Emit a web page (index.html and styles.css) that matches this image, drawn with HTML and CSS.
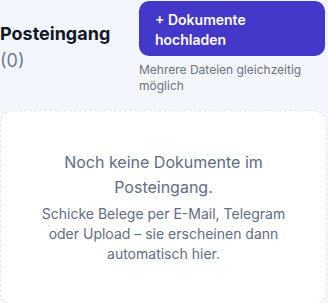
FILE: index.html
```html
<!DOCTYPE html>
<html lang="de">
<head>
  <meta charset="UTF-8">
  <meta name="viewport" content="width=device-width, initial-scale=1.0">
  <title>Posteingang</title>
  <link rel="stylesheet" href="styles.css">
</head>
<body>
  <div class="page">
    <div class="inbox-header">
      <h2 class="inbox-title">Posteingang <span class="inbox-count">(0)</span></h2>
      <div class="upload">
        <button class="upload-btn">+ Dokumente hochladen</button>
        <div class="upload-hint">Mehrere Dateien gleichzeitig möglich</div>
      </div>
    </div>

    <div class="empty-card">
      <p class="empty-title">Noch keine Dokumente im Posteingang.</p>
      <p class="empty-text">Schicke Belege per E-Mail, Telegram oder Upload – sie erscheinen dann automatisch hier.</p>
    </div>
  </div>
</body>
</html>
```

FILE: styles.css
```css
* {
  box-sizing: border-box;
  margin: 0;
  padding: 0;
}
body {
  background-color: #f4f6fd;
  font-family: Inter, "Noto Sans", sans-serif;
  color: #111827;
}
.page {
  padding: 1px 1px 0 0;
}
.inbox-header {
  display: flex;
  align-items: center;
  justify-content: space-between;
  gap: 12px;
}
.inbox-title {
  font-size: 18px;
  font-weight: 700;
  line-height: 26px;
  color: #111827;
}
.inbox-count {
  display: block;
  margin-top: 1px;
  font-weight: 400;
  color: #6b7a90;
}
.upload {
  width: 186px;
  margin-right: 2px;
}
.upload-btn {
  display: block;
  width: 100%;
  padding: 9px 16px 6px;
  border: none;
  border-radius: 10px;
  background-color: #4338ca;
  color: #fff;
  font: 600 14px/20px Inter, "Noto Sans", sans-serif;
  text-align: left;
  cursor: pointer;
}
.upload-hint {
  margin-top: 6px;
  font-size: 12px;
  line-height: 16px;
  color: #6b7280;
}
.empty-card {
  margin-top: 16px;
  padding: 39px 24px 40px;
  background-color: #fff;
  border: 1px dashed #e3e7f2;
  border-radius: 14px;
  text-align: center;
  color: #5f6c84;
}
.empty-title {
  font-size: 16px;
  line-height: 25px;
}
.empty-text {
  margin-top: 4px;
  font-size: 14px;
  line-height: 20px;
}
```
